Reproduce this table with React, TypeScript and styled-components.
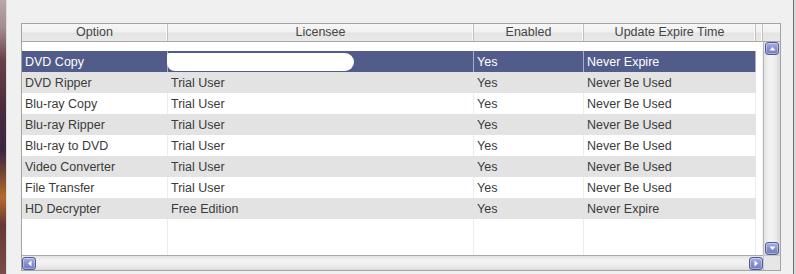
import styled, { createGlobalStyle } from "styled-components";

// **GLOBAL
const GlobalStyle = createGlobalStyle`
	html, body {
		margin: 0;
		padding: 0;
		background: #f0f0f0;
	}
	* {
		box-sizing: border-box;
	}
`;

type Row = {
	option: string;
	licensee: string;
	enabled: string;
	expire: string;
	hidden?: boolean;
};

const rows: Row[] = [
	{ option: "DVD Copy", licensee: "", enabled: "Yes", expire: "Never Expire", hidden: true },
	{ option: "DVD Ripper", licensee: "Trial User", enabled: "Yes", expire: "Never Be Used" },
	{ option: "Blu-ray Copy", licensee: "Trial User", enabled: "Yes", expire: "Never Be Used" },
	{ option: "Blu-ray Ripper", licensee: "Trial User", enabled: "Yes", expire: "Never Be Used" },
	{ option: "Blu-ray to DVD", licensee: "Trial User", enabled: "Yes", expire: "Never Be Used" },
	{ option: "Video Converter", licensee: "Trial User", enabled: "Yes", expire: "Never Be Used" },
	{ option: "File Transfer", licensee: "Trial User", enabled: "Yes", expire: "Never Be Used" },
	{ option: "HD Decrypter", licensee: "Free Edition", enabled: "Yes", expire: "Never Expire" },
	{ option: "", licensee: "", enabled: "", expire: "" },
	{ option: "", licensee: "", enabled: "", expire: "" },
];

const columns = [
	{ title: "Option", width: 146 },
	{ title: "Licensee", width: 306 },
	{ title: "Enabled", width: 110 },
	{ title: "Update Expire Time", width: 172 },
];

// **FRAME
const ScreenSC = styled.div`
	display: flex;
	width: 796px;
	height: 274px;
	overflow: hidden;
`;
const DesktopStripSC = styled.div`
	width: 6px;
	background-image: linear-gradient(
		180deg,
		#b9a7a9 0%,
		#a48c90 10%,
		#6b4048 22%,
		#4a2a3e 40%,
		#3c2440 55%,
		#8a5030 66%,
		#b56a2c 72%,
		#6a3834 82%,
		#7c4a48 100%
	);
`;
const WindowEdgeSC = styled.div`
	width: 1px;
	background: #dcdcdc;
`;
const WindowSC = styled.div`
	flex: 1;
	background: #f0f0f0;
	padding: 23px 0 0 14px;
`;
const RightEdgeSC = styled.div`
	width: 3px;
	border-left: 1px solid #6e6e6e;
	background: #d9d9d9;
`;

// **GRID
const GridSC = styled.div`
	display: grid;
	grid-template-columns: 741px 17px;
	grid-template-rows: 18px 213px 15px;
	width: 760px;
	height: 248px;
	border: 1px solid #a3a3a3;
	font-family: "Liberation Sans", Arial, sans-serif;
	font-size: 12.5px;
	color: #3b3b3b;
`;
const HeaderSC = styled.div`
	grid-column: 1 / 3;
	display: flex;
	background-image: linear-gradient(180deg, #f7f7f7 0%, #f1f1f1 45%, #e4e4e4 55%, #e9e9e9 100%);
	border-bottom: 1px solid #a8a8a8;
`;
const HeaderCellSC = styled.div<{ $w: number; $last?: boolean }>`
	width: ${(p) => p.$w}px;
	flex: none;
	text-align: center;
	line-height: 17px;
	color: #454545;
	border-right: ${(p) => (p.$last ? "none" : "1px solid #c2c2c2")};
	box-shadow: ${(p) => (p.$last ? "none" : "inset -1px 0 0 #fafafa")};
`;
const BodySC = styled.div`
	background: #fff;
	padding-top: 9px;
	overflow: hidden;
`;
const RowSC = styled.div<{ $tone: "sel" | "gray" | "white" }>`
	display: flex;
	height: 21px;
	background: ${(p) => (p.$tone === "sel" ? "#525c8b" : p.$tone === "gray" ? "#e3e3e3" : "#fff")};
	color: ${(p) => (p.$tone === "sel" ? "#fff" : "#3b3b3b")};
	--sep: ${(p) => (p.$tone === "sel" ? "#a7acc8" : p.$tone === "gray" ? "#e3e3e3" : "#ededed")};
`;
const CellSC = styled.div<{ $w: number }>`
	width: ${(p) => p.$w}px;
	flex: none;
	display: flex;
	align-items: center;
	padding-left: 3px;
	white-space: nowrap;
	border-right: 1px solid var(--sep);
`;
const FillerCellSC = styled.div`
	flex: 1;
	background: #fff;
	border-right: 1px solid #f2f2f2;
`;
const RedactSC = styled.span`
	display: inline-block;
	width: 187px;
	height: 18px;
	margin: 1px 0 0 -4px;
	background: #fff;
	border-radius: 2px 9px 9px 8px;
`;

// **SCROLLBARS
const VScrollSC = styled.div`
	display: flex;
	flex-direction: column;
	align-items: center;
	justify-content: space-between;
	border-left: 1px solid #b4b4b4;
	background-image: linear-gradient(90deg, #e2e2e2 0%, #f4f4f4 35%, #ececec 70%, #d9d9d9 100%);
`;
const HScrollSC = styled.div`
	display: flex;
	align-items: center;
	justify-content: space-between;
	border-top: 1px solid #a9a9a9;
	background-image: linear-gradient(180deg, #e3e3e3 0%, #f4f4f4 35%, #ededed 70%, #dcdcdc 100%);
`;
const CornerSC = styled.div`
	border-top: 1px solid #c8c8c8;
	border-left: 1px solid #c8c8c8;
	background: #e6e6e6;
`;
const ArrowButtonSC = styled.div`
	width: 14px;
	height: 13px;
	flex: none;
	display: flex;
	align-items: center;
	justify-content: center;
	border: 1px solid #535c9a;
	border-radius: 3px;
	background-image: linear-gradient(180deg, #aab1e2 0%, #8890cf 50%, #737cbd 100%);
	box-shadow: inset 0 0 0 1px rgba(255, 255, 255, 0.35);
`;

const rotations = { up: 0, down: 180, left: 270, right: 90 };

const ArrowButton: React.FC<{ dir: keyof typeof rotations }> = ({ dir }) => (
	<ArrowButtonSC>
		<svg width="7" height="5" viewBox="0 0 7 5" style={{ transform: `rotate(${rotations[dir]}deg)` }}>
			<path d="M0.5 4.5 L3.5 1 L6.5 4.5 Z" fill="#fff" />
		</svg>
	</ArrowButtonSC>
);

export default function App() {
	return (
		<>
			<GlobalStyle />
			<ScreenSC>
				<DesktopStripSC />
				<WindowEdgeSC />
				<WindowSC>
					<GridSC>
						<HeaderSC>
							{columns.map((c) => (
								<HeaderCellSC key={c.title} $w={c.width}>
									{c.title}
								</HeaderCellSC>
							))}
							<HeaderCellSC $w={7} />
							<HeaderCellSC $w={17} $last />
						</HeaderSC>
						<BodySC>
							{rows.map((r, i) => (
								<RowSC key={i} $tone={i === 0 ? "sel" : i % 2 === 1 && i < 8 ? "gray" : "white"}>
									<CellSC $w={146}>{r.option}</CellSC>
									<CellSC $w={306}>{r.hidden ? <RedactSC /> : r.licensee}</CellSC>
									<CellSC $w={110}>{r.enabled}</CellSC>
									<CellSC $w={172}>{r.expire}</CellSC>
									<FillerCellSC />
								</RowSC>
							))}
						</BodySC>
						<VScrollSC>
							<ArrowButton dir="up" />
							<ArrowButton dir="down" />
						</VScrollSC>
						<HScrollSC>
							<ArrowButton dir="left" />
							<ArrowButton dir="right" />
						</HScrollSC>
						<CornerSC />
					</GridSC>
				</WindowSC>
				<RightEdgeSC />
			</ScreenSC>
		</>
	);
}
